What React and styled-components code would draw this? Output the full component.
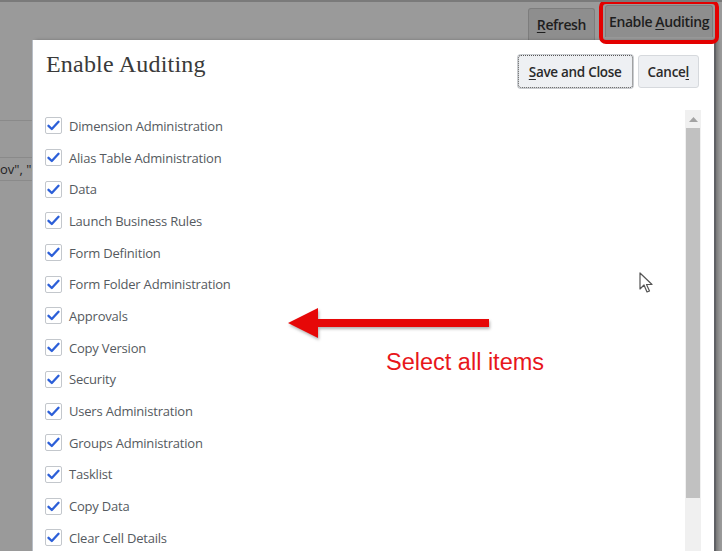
import styled, { createGlobalStyle } from "styled-components";

const Global = createGlobalStyle`
  html, body { margin: 0; padding: 0; }
  body {
    background: #9a9a9a;
    width: 722px;
    height: 551px;
    overflow: hidden;
    font-family: "Open Sans", "Noto Sans", sans-serif;
  }
`;

const Page = styled.div`
  position: relative;
  width: 722px;
  height: 551px;
  overflow: hidden;
  border-top: 2px solid #7a7a7a;
  box-sizing: border-box;
`;

const TopBar = styled.div`
  height: 38px;
  display: flex;
  justify-content: flex-end;
  align-items: flex-end;
  gap: 4px;
  padding-right: 3px;
`;

const ToolButton = styled.button`
  height: 32px;
  padding: 0 ${(p) => (p.$tight ? "3px" : "8px")};
  border: 1px solid #7d7d7d;
  border-bottom: none;
  border-radius: 3px 3px 0 0;
  background: #8e8e8e;
  color: #1e1e1e;
  font-family: "Open Sans", sans-serif;
  font-weight: 600;
  font-size: 14px;
  letter-spacing: -0.4px;
  u { text-decoration-thickness: 1px; text-underline-offset: 2px; }
`;

const Highlight = styled.div`
  position: relative;
  z-index: 2;
  border: 4px solid #e30000;
  border-radius: 7px;
  padding: 1px 2px 3px 2px;
  margin-bottom: -4px;
  display: flex;
`;

const BgLines = styled.div`
  margin-top: 80px;
  width: 32px;
  border-top: 1px solid #8a8a8a;
`;

const BgRow = styled.div`
  height: ${(p) => p.$h}px;
  border-bottom: 1px solid #8a8a8a;
  font-size: 13px;
  color: #222;
  display: flex;
  align-items: center;
  white-space: nowrap;
  overflow: hidden;
`;

const Dialog = styled.div`
  position: absolute;
  left: 32px;
  top: 38px;
  width: 681px;
  height: 560px;
  background: #fff;
  border-left: 1px solid #b8bec6;
  box-shadow: 2px 0 0 #5f6064, 4px 0 3px rgba(60, 60, 60, 0.4);
  display: flex;
  flex-direction: column;
`;

const Header = styled.div`
  display: flex;
  justify-content: space-between;
  align-items: flex-start;
  padding: 11px 15px 0 13px;
  height: 59px;
`;

const Title = styled.h1`
  margin: 0;
  font-family: "Liberation Serif", "DejaVu Serif", serif;
  font-weight: 400;
  font-size: 24px;
  color: #3a3a3a;
  letter-spacing: 0.2px;
`;

const Actions = styled.div`
  display: flex;
  gap: 5px;
  padding-top: 4px;
`;

const ActionButton = styled.button`
  height: 33px;
  padding: 0 ${(p) => (p.$wide ? "10px" : "9px")};
  border: 1px ${(p) => (p.$focus ? "dotted #555" : "solid #d6d9dd")};
  border-radius: 3px;
  background: #eef0f3;
  color: #2a2a2a;
  font-family: "Open Sans", sans-serif;
  font-weight: 600;
  font-size: 13.5px;
  letter-spacing: -0.3px;
  box-shadow: ${(p) => (p.$focus ? "0 0 0 1px #c9ccd0" : "none")};
  u { text-underline-offset: 2px; }
`;

const Body = styled.div`
  flex: 1;
  display: flex;
`;

const List = styled.div`
  flex: 1;
  padding: 0 0 0 12px;
`;

const Row = styled.label`
  display: flex;
  align-items: center;
  gap: 7px;
  height: 31.7px;
  font-size: 13px;
  color: #555a60;
  letter-spacing: -0.2px;
`;

const Box = styled.span`
  width: 15px;
  height: 15px;
  border: 1px solid #c3c7cc;
  border-radius: 2px;
  display: flex;
  align-items: center;
  justify-content: center;
  background: #fff;
`;

const Scrollbar = styled.div`
  width: 16px;
  margin-right: 13px;
  background: #f0f0f0;
  display: flex;
  flex-direction: column;
`;

const ScrollArrow = styled.div`
  height: 18px;
  display: flex;
  align-items: center;
  justify-content: center;
`;

const Thumb = styled.div`
  height: 370px;
  margin: 0 1px;
  background: #c1c1c1;
`;

const Note = styled.div`
  position: absolute;
  left: 386px;
  top: 347px;
  font-family: "Liberation Sans", Arial, sans-serif;
  font-size: 23.5px;
  line-height: 1.15;
  color: #e8161b;
`;

const Arrow = styled.svg`
  position: absolute;
  left: 284px;
  top: 302px;
  filter: drop-shadow(1px 2px 1.5px rgba(0, 0, 0, 0.3));
`;

const Cursor = styled.svg`
  position: absolute;
  left: 639px;
  top: 270px;
`;

const items = [
  "Dimension Administration",
  "Alias Table Administration",
  "Data",
  "Launch Business Rules",
  "Form Definition",
  "Form Folder Administration",
  "Approvals",
  "Copy Version",
  "Security",
  "Users Administration",
  "Groups Administration",
  "Tasklist",
  "Copy Data",
  "Clear Cell Details",
  "Manage Substitution Variables",
];

const Check = () => (
  <svg width="13" height="11" viewBox="0 0 13 11">
    <path d="M1.5 5.8 L4.8 9 L11.5 1.8" fill="none" stroke="#2c5fd8" strokeWidth="2.3" strokeLinecap="round" strokeLinejoin="round" />
  </svg>
);

export default function App() {
  return (
    <>
      <Global />
      <Page>
        <TopBar>
          <ToolButton><u>R</u>efresh</ToolButton>
          <Highlight>
            <ToolButton $tight>Enable <u>A</u>uditing</ToolButton>
          </Highlight>
        </TopBar>
        <BgLines>
          <BgRow $h={36} />
          <BgRow $h={22}>ov", "C</BgRow>
        </BgLines>

        <Dialog>
          <Header>
            <Title>Enable Auditing</Title>
            <Actions>
              <ActionButton $focus $wide><u>S</u>ave and Close</ActionButton>
              <ActionButton>Cance<u>l</u></ActionButton>
            </Actions>
          </Header>
          <Body>
            <List>
              {items.map((it) => (
                <Row key={it}>
                  <Box><Check /></Box>
                  {it}
                </Row>
              ))}
            </List>
            <Scrollbar>
              <ScrollArrow>
                <svg width="9" height="5" viewBox="0 0 9 5"><path d="M0 5 L4.5 0 L9 5 Z" fill="#a3a3a3" /></svg>
              </ScrollArrow>
              <Thumb />
              <div style={{ flex: 1 }} />
            </Scrollbar>
          </Body>
        </Dialog>

        <Arrow width="210" height="40" viewBox="0 0 210 40">
          <path d="M4 19 L34 4 L34 15 L205 15 L205 23 L34 23 L34 34 Z" fill="#e60808" />
        </Arrow>
        <Note>Select all items</Note>

        <Cursor width="16" height="22" viewBox="0 0 16 22">
          <path d="M1 1 L1 17 L5 13 L8 20 L10.5 19 L7.5 12.5 L13 12.5 Z" fill="#fff" stroke="#555" strokeWidth="1.2" strokeLinejoin="round" />
        </Cursor>
      </Page>
    </>
  );
}
